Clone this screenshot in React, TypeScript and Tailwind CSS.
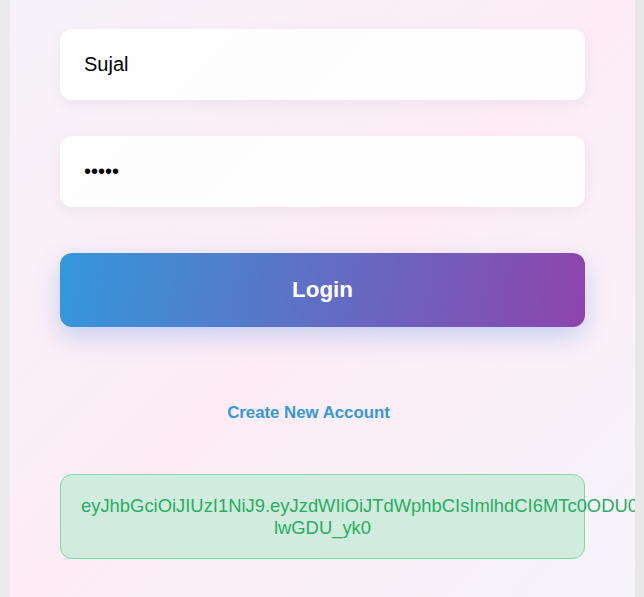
import React, { useState } from 'react';

const TOKEN =
    'eyJhbGciOiJIUzI1NiJ9.eyJzdWIiOiJTdWphbCIsImlhdCI6MTc0ODU0NjAwMCwiZXhwIjoxNzQ4NjMyNDAwfQ.Xk3Pq9ZrT2vWb8sN4mYhLcJ1dFgE6uA0oR5tK7iB-lwGDU_yk0';

const App = () => {
    const [username, setUsername] = useState('Sujal');
    const [password, setPassword] = useState('12345');

    return (
        <div className="flex min-h-screen w-full overflow-hidden bg-[#ebebeb] pl-[10px] font-['Liberation_Sans',Arial,sans-serif]">
            {/* --- Card --- */}
            <div className="relative min-h-screen w-[625px] shrink-0 overflow-hidden bg-[linear-gradient(135deg,#f6f2f9_0%,#fdecf5_50%,#f6f4fb_100%)] px-[50px] pt-[29px] pb-[40px]">
                <form className="flex flex-col" onSubmit={(e) => e.preventDefault()}>
                    <input
                        type="text"
                        value={username}
                        onChange={(e) => setUsername(e.target.value)}
                        className="w-full rounded-xl bg-white/90 px-6 py-6 text-[20px] leading-[23px] text-black shadow-[0_4px_15px_rgba(0,0,0,0.05)] outline-none"
                    />
                    <input
                        type="password"
                        value={password}
                        onChange={(e) => setPassword(e.target.value)}
                        className="mt-9 w-full rounded-xl bg-white/90 px-6 py-6 text-[20px] leading-[23px] text-black shadow-[0_4px_15px_rgba(0,0,0,0.05)] outline-none"
                    />
                    <button
                        type="submit"
                        className="mt-[46px] w-full rounded-xl bg-[linear-gradient(100deg,#3498db,#8e44ad)] py-6 text-[22.4px] leading-[26px] font-bold text-white shadow-[0_10px_25px_rgba(52,120,219,0.25)]"
                    >
                        Login
                    </button>
                </form>

                {/* --- Register link --- */}
                <div className="mt-[76px] flex justify-center pr-[28px]">
                    <a href="#" className="text-[16.8px] leading-[19px] font-bold text-[#3498db]">
                        Create New Account
                    </a>
                </div>

                {/* --- Token --- */}
                <div className="mt-[52px] rounded-xl border border-[#7ddba3] bg-[#d2ebdf] p-5 text-center text-[18.4px] leading-[21.5px] text-[#27ae60]">
                    {TOKEN}
                </div>
            </div>
            <div className="min-h-screen flex-1 bg-[#e8e8e8]" />
        </div>
    );
};

export default App;
